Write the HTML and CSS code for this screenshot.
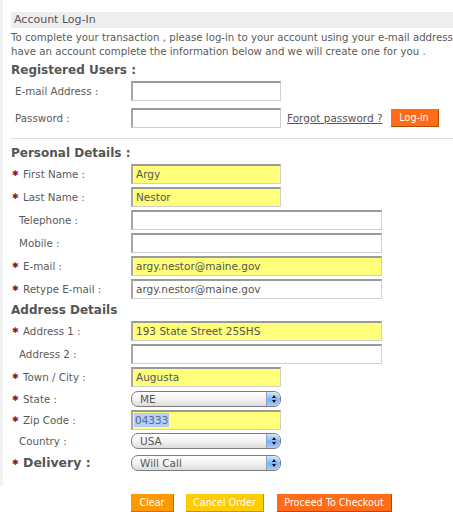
FILE: index.html
```html
<!DOCTYPE html>
<html>
<head>
<meta charset="utf-8">
<link rel="stylesheet" href="styles.css">
</head>
<body>
<div class="page">
  <div class="titlebar">Account Log-In</div>
  <p class="intro">To complete your transaction , please log-in to your account using your e-mail address<br>have an account complete the information below and we will create one for you .</p>

  <h2 class="heading first">Registered Users :</h2>
  <div class="row tall">
    <label class="lbl login">E-mail Address :</label>
    <input class="field narrow" type="text">
  </div>
  <div class="row tall">
    <label class="lbl login">Password :</label>
    <input class="field narrow" type="password">
    <a class="forgot" href="#">Forgot password ?</a>
    <button class="btn login-btn" type="button">Log-in</button>
  </div>

  <hr class="rule">

  <h2 class="heading personal">Personal Details :</h2>
  <div class="row"><label class="lbl req"><span class="star">✱</span>First Name :</label><input class="field narrow filled" type="text" value="Argy"></div>
  <div class="row"><label class="lbl req"><span class="star">✱</span>Last Name :</label><input class="field narrow filled" type="text" value="Nestor"></div>
  <div class="row"><label class="lbl opt">Telephone :</label><input class="field wide" type="text"></div>
  <div class="row"><label class="lbl opt">Mobile :</label><input class="field wide" type="text"></div>
  <div class="row"><label class="lbl req"><span class="star">✱</span>E-mail :</label><input class="field wide filled" type="text" value="argy.nestor@maine.gov"></div>
  <div class="row"><label class="lbl req"><span class="star">✱</span>Retype E-mail :</label><input class="field wide" type="text" value="argy.nestor@maine.gov"></div>

  <h2 class="heading address">Address Details</h2>
  <div class="row"><label class="lbl req"><span class="star">✱</span>Address 1 :</label><input class="field wide filled" type="text" value="193 State Street 25SHS"></div>
  <div class="row"><label class="lbl opt">Address 2 :</label><input class="field wide" type="text"></div>
  <div class="row"><label class="lbl req"><span class="star">✱</span>Town / City :</label><input class="field narrow filled" type="text" value="Augusta"></div>
  <div class="row short"><label class="lbl req"><span class="star">✱</span>State :</label>
    <div class="select"><span class="sel-text">ME</span><span class="sel-arrows"><span class="up"></span><span class="down"></span></span></div>
  </div>
  <div class="row short"><label class="lbl req"><span class="star">✱</span>Zip Code :</label>
    <div class="field narrow filled fake"><span class="selected">04333</span></div>
  </div>
  <div class="row mid"><label class="lbl opt">Country :</label>
    <div class="select"><span class="sel-text">USA</span><span class="sel-arrows"><span class="up"></span><span class="down"></span></span></div>
  </div>
  <div class="row"><label class="lbl req delivery"><span class="star">✱</span>Delivery :</label>
    <div class="select"><span class="sel-text">Will Call</span><span class="sel-arrows"><span class="up"></span><span class="down"></span></span></div>
  </div>
</div>

<div class="actions">
  <button class="btn clear" type="button">Clear</button>
  <button class="btn cancel" type="button">Cancel Order</button>
  <button class="btn proceed" type="button">Proceed To Checkout</button>
</div>
</body>
</html>
```

FILE: styles.css
```css
html, body {
  margin: 0;
  padding: 0;
  background: #ffffff;
  overflow: hidden;
}
body {
  font-family: "DejaVu Sans", Verdana, sans-serif;
  font-size: 10px;
  color: #5a5a5a;
  width: 453px;
}
.page {
  border-left: 3px solid #f2f2f2;
  padding: 12px 0 12px 8px;
}
.titlebar {
  background: #eeeeee;
  height: 16px;
  line-height: 16px;
  padding-left: 3px;
  color: #555;
  font-size: 11px;
  white-space: nowrap;
}
.intro {
  margin: 3px 0 0 0;
  line-height: 14px;
  font-size: 10.2px;
  white-space: nowrap;
  color: #5a5a5a;
}
.heading {
  margin: 0;
  font-size: 12px;
  font-weight: bold;
  color: #555;
  line-height: 14px;
  height: 14px;
}
.heading.first { margin-top: 4px; }
.heading.personal { margin-top: 7px; margin-bottom: 2px; }
.heading.address { margin-top: 3px; margin-bottom: 2px; }

.row {
  display: flex;
  align-items: center;
  height: 23px;
}
.row.tall { height: 27px; }
.row.short { height: 21px; }
.row.mid { height: 21px; }

.lbl {
  width: 120px;
  flex: none;
  display: flex;
  align-items: center;
  white-space: nowrap;
  color: #5a5a5a;
  font-size: 10.3px;
}
.lbl.login { padding-left: 4px; width: 116px; }
.lbl.opt { padding-left: 8px; width: 112px; }
.lbl.req { padding-left: 1px; width: 119px; }
.star {
  color: #8b1538;
  font-size: 8px;
  width: 11px;
  font-weight: bold;
}
.lbl.delivery {
  font-size: 12.5px;
  font-weight: bold;
  color: #555;
}

.field {
  box-sizing: border-box;
  height: 20px;
  border-style: solid;
  border-width: 2px 1px 1px 2px;
  border-color: #9a9a9a #cfcfcf #cfcfcf #a8a8a8;
  background: #fff;
  font-family: "DejaVu Sans", Verdana, sans-serif;
  font-size: 10.5px;
  color: #555;
  padding: 0 0 0 3px;
  margin: 0;
  outline: none;
}
.field.narrow { width: 150px; }
.field.wide { width: 251px; }
.field.filled { background: #ffff7a; }
.field.fake {
  display: flex;
  align-items: center;
  padding-left: 1px;
}
.selected {
  background: #b4cdf5;
  padding: 1px 1px;
  color: #5a6a8a;
}

.forgot {
  margin-left: 6px;
  color: #555;
  font-size: 10.5px;
  text-decoration: underline;
  white-space: nowrap;
}
.btn {
  border: none;
  border-right: 1px solid #b34a00;
  border-bottom: 1px solid #b34a00;
  color: #fff;
  font-family: "DejaVu Sans", Verdana, sans-serif;
  font-size: 9.6px;
  height: 18px;
  padding: 0;
  margin: 0;
  white-space: nowrap;
  cursor: pointer;
}
.login-btn {
  margin-left: 8px;
  width: 48px;
  background: #ff6b16;
}

.rule {
  margin: 7px 0 0 0;
  border: none;
  border-top: 1px solid #dcdcdc;
  height: 0;
}

.select {
  box-sizing: border-box;
  width: 150px;
  height: 16px;
  border: 1px solid #7d7d7d;
  border-radius: 7px;
  background: linear-gradient(#ffffff, #f3f3f3 50%, #dcdcdc);
  display: flex;
  align-items: center;
  overflow: hidden;
}
.sel-text {
  flex: 1;
  padding-left: 8px;
  color: #555;
  font-size: 10.5px;
  line-height: 14px;
  white-space: nowrap;
}
.sel-arrows {
  width: 13px;
  height: 14px;
  background: linear-gradient(#d8e8fb, #7eaef0 55%, #a9cbf7);
  border-left: 1px solid #8aa6d0;
  border-radius: 0 7px 7px 0;
  display: flex;
  flex-direction: column;
  align-items: center;
  justify-content: center;
  gap: 2px;
}
.up {
  width: 0;
  height: 0;
  border-left: 2px solid transparent;
  border-right: 2px solid transparent;
  border-bottom: 3px solid #111;
}
.down {
  width: 0;
  height: 0;
  border-left: 2px solid transparent;
  border-right: 2px solid transparent;
  border-top: 3px solid #111;
}

.actions {
  display: flex;
  padding: 8px 0 0 131px;
  gap: 12px;
}
.clear { width: 43px; background: #ff9900; border-color: #c86e00; }
.cancel { width: 78px; background: #ffcc00; border-color: #d18a00; margin-left: 0; }
.proceed { width: 115px; background: #ff6b16; margin-left: 1px; }
```
